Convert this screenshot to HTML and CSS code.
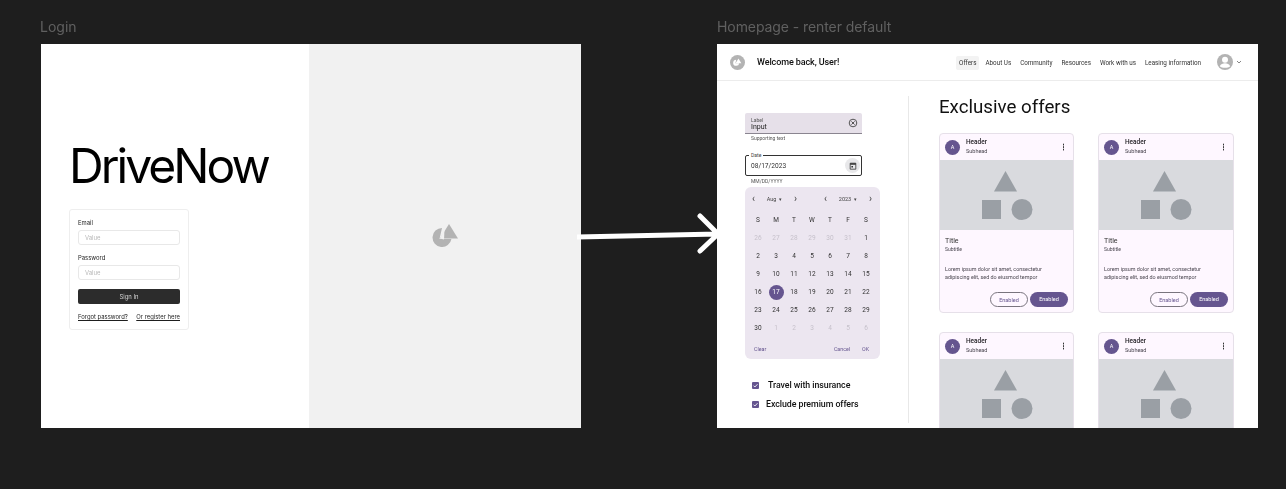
FILE: index.html
```html
<!DOCTYPE html>
<html lang="en">
<head>
<meta charset="utf-8">
<title>DriveNow</title>
<link rel="stylesheet" href="styles.css">
</head>
<body>
<div class="canvas">
  <div class="frame-label login-label">Login</div>
  <section class="frame login-frame">
    <div class="login-left">
      <h1 class="brand">DriveNow</h1>
      <form class="signin">
        <div class="lfield"><span>Email</span><div class="linput">Value</div></div>
        <div class="lfield"><span>Password</span><div class="linput">Value</div></div>
        <div class="lbutton">Sign In</div>
        <div class="llinks"><a>Forgot password?</a><a>Or register here</a></div>
      </form>
    </div>
    <div class="login-right">
      <svg class="logo-big" viewBox="0 0 28 24"><path d="M10 5a9.500 9.500 0 1 0 9.400 11H7.500z" fill="#b3b3b3"/><path d="M17 1l9 14.500H8z" fill="#b3b3b3"/><path d="M12.500 6.500L8 15.500l4 1z" fill="#f1f1f1"/></svg>
    </div>
  </section>

  <svg class="arrow" viewBox="0 0 146 44"><path d="M0 24L141 21M123 3L141 21L123 38" fill="none" stroke="#fff" stroke-width="5" stroke-linecap="round" stroke-linejoin="round"/></svg>

  <div class="frame-label home-label">Homepage - renter default</div>
  <section class="frame home-frame">
    <header class="topbar">
      <div class="avatar-logo"><svg viewBox="0 0 28 24"><path d="M10 5a9.500 9.500 0 1 0 9.400 11H7.500z" fill="#fff"/><path d="M17 1l9 14.500H8z" fill="#fff"/></svg></div>
      <div class="welcome">Welcome back, User!</div>
      <nav class="nav">
        <a class="active">Offers</a><a>About Us</a><a>Community</a><a>Resources</a><a>Work with us</a><a>Leasing information</a>
      </nav>
      <svg class="user" viewBox="0 0 16 16"><circle cx="8" cy="8" r="8" fill="#b3b3b3"/><circle cx="8" cy="5.800" r="3" fill="#fff"/><path d="M2.800 12.200c1-2.200 3-3 5.200-3s4.200.8 5.200 3c-1.200 1-3 1.600-5.200 1.600s-4-.6-5.200-1.600z" fill="#fff"/></svg>
      <svg class="caret" viewBox="0 0 6 4"><path d="M1 1l2 2 2-2" fill="none" stroke="#666" stroke-width=".8"/></svg>
    </header>
    <div class="home-body">
      <aside class="side">
        <div class="filled">
          <div><small>Label</small><span>Input</span></div>
          <svg viewBox="0 0 10 10"><circle cx="5" cy="5" r="3.800" fill="none" stroke="#444" stroke-width=".9"/><path d="M3.400 3.400l3.200 3.200M6.600 3.400l-3.200 3.200" stroke="#444" stroke-width=".9"/></svg>
        </div>
        <div class="support">Supporting text</div>
        <div class="date">
          <small>Date</small><span>08/17/2023</span>
          <i class="date-btn"><svg viewBox="0 0 10 10"><path d="M1.500 1.500h7v7.500h-7z" fill="none" stroke="#333" stroke-width="1"/><path d="M1.500 1.500h7v2h-7zM3 5h2v2H3z" fill="#333"/></svg></i>
        </div>
        <div class="support date-support">MM/DD/YYYY</div>
        <div class="calendar">
          <div class="cal-head">
            <span>‹</span><b class="cal-month">Aug<em>▾</em></b><span>›</span><u></u><span>‹</span><b class="cal-year">2023<em>▾</em></b><span>›</span>
          </div>
          <div class="cal-grid">
            <span class="wd">S</span><span class="wd">M</span><span class="wd">T</span><span class="wd">W</span><span class="wd">T</span><span class="wd">F</span><span class="wd">S</span>
            <span class="off">26</span><span class="off">27</span><span class="off">28</span><span class="off">29</span><span class="off">30</span><span class="off">31</span><span>1</span>
            <span>2</span><span>3</span><span>4</span><span>5</span><span>6</span><span>7</span><span>8</span>
            <span>9</span><span>10</span><span>11</span><span>12</span><span>13</span><span>14</span><span>15</span>
            <span>16</span><span class="sel">17</span><span>18</span><span>19</span><span>20</span><span>21</span><span>22</span>
            <span>23</span><span>24</span><span>25</span><span>26</span><span>27</span><span>28</span><span>29</span>
            <span>30</span><span class="off">1</span><span class="off">2</span><span class="off">3</span><span class="off">4</span><span class="off">5</span><span class="off">6</span>
          </div>
          <div class="cal-actions"><a>Clear</a><u></u><a>Cancel</a><a>OK</a></div>
        </div>
        <label class="check first"><i><svg viewBox="0 0 8 8"><path d="M1.800 4.200l1.500 1.500 3-3.200" fill="none" stroke="#fff" stroke-width="1"/></svg></i><span>Travel with insurance</span></label>
        <label class="check second"><i><svg viewBox="0 0 8 8"><path d="M1.800 4.200l1.500 1.500 3-3.200" fill="none" stroke="#fff" stroke-width="1"/></svg></i><span>Exclude premium offers</span></label>
      </aside>
      <main class="offers">
        <h2>Exclusive offers</h2>
        <div class="cards">
          <article class="card">
            <div class="card-head"><i>A</i><div><b>Header</b><small>Subhead</small></div><em></em></div>
            <div class="media"><svg viewBox="0 0 70 70"><path d="M33.500 11l11.500 20.500H22z" fill="#9a9fa5"/><rect x="10" y="40" width="19" height="19" fill="#9a9fa5"/><circle cx="50" cy="49.500" r="10.500" fill="#9a9fa5"/></svg></div>
            <div class="card-body"><b>Title</b><small>Subtitle</small><p>Lorem ipsum dolor sit amet, consectetur adipiscing elit, sed do eiusmod tempor</p><div class="btns"><a class="ghost">Enabled</a><a class="solid">Enabled</a></div></div>
          </article>
          <article class="card">
            <div class="card-head"><i>A</i><div><b>Header</b><small>Subhead</small></div><em></em></div>
            <div class="media"><svg viewBox="0 0 70 70"><path d="M33.500 11l11.500 20.500H22z" fill="#9a9fa5"/><rect x="10" y="40" width="19" height="19" fill="#9a9fa5"/><circle cx="50" cy="49.500" r="10.500" fill="#9a9fa5"/></svg></div>
            <div class="card-body"><b>Title</b><small>Subtitle</small><p>Lorem ipsum dolor sit amet, consectetur adipiscing elit, sed do eiusmod tempor</p><div class="btns"><a class="ghost">Enabled</a><a class="solid">Enabled</a></div></div>
          </article>
          <article class="card">
            <div class="card-head"><i>A</i><div><b>Header</b><small>Subhead</small></div><em></em></div>
            <div class="media"><svg viewBox="0 0 70 70"><path d="M33.500 11l11.500 20.500H22z" fill="#9a9fa5"/><rect x="10" y="40" width="19" height="19" fill="#9a9fa5"/><circle cx="50" cy="49.500" r="10.500" fill="#9a9fa5"/></svg></div>
          </article>
          <article class="card">
            <div class="card-head"><i>A</i><div><b>Header</b><small>Subhead</small></div><em></em></div>
            <div class="media"><svg viewBox="0 0 70 70"><path d="M33.500 11l11.500 20.500H22z" fill="#9a9fa5"/><rect x="10" y="40" width="19" height="19" fill="#9a9fa5"/><circle cx="50" cy="49.500" r="10.500" fill="#9a9fa5"/></svg></div>
          </article>
        </div>
      </main>
    </div>
  </section>
</div>
</body>
</html>
```
FILE: styles.css
```css
* { box-sizing: border-box; }
html, body { margin: 0; height: 100%; overflow: hidden; background: #1e1e1e; }
.canvas { position: relative; width: 1286px; height: 489px; font-family: Roboto, sans-serif; will-change: opacity; }
.frame-label { position: absolute; top: 19px; font: 14px/16px Inter, sans-serif; color: #606060; }
.login-label { left: 40px; }
.home-label { left: 717px; letter-spacing: -.08px; }
.frame { position: absolute; top: 44px; height: 384px; background: #fff; overflow: hidden; }
.login-frame { left: 41px; width: 540px; display: flex; }
.home-frame { left: 717px; width: 541px; }

.login-left { width: 268px; padding-left: 28px; font-family: Inter, sans-serif; }
.brand { margin: 93px 0 0 0; font: 400 48px/58px Inter, sans-serif; letter-spacing: -2.960px; color: #000; }
.signin { width: 120px; height: 121px; margin-top: 14px; padding: 9px 8px; border: 1px solid #eee; border-radius: 3px; display: flex; flex-direction: column; }
.lfield { height: 35px; flex: none; font-size: 5.900px; line-height: 8px; color: #1e1e1e; }
.linput { height: 15px; margin-top: 3px; padding-left: 6px; border: 1px solid #e8e8e8; border-radius: 3px; font-size: 5.900px; line-height: 13px; color: #b8b8b8; }
.lbutton { height: 15px; flex: none; border-radius: 2px; background: #2c2c2c; color: #d5d5d5; font-size: 5.900px; line-height: 15px; text-align: center; }
.llinks { display: flex; justify-content: space-between; margin-top: 9px; font-size: 5.900px; line-height: 8px; color: #1e1e1e; }
.llinks a { text-decoration: underline; }
.login-right { flex: 1; background: #f1f1f1; display: flex; align-items: center; justify-content: center; }
.logo-big { width: 28px; height: 24px; margin: 0 0 2px 1px; }
.arrow { position: absolute; left: 577px; top: 213px; width: 146px; height: 44px; }

.topbar { height: 37px; border-bottom: 1px solid #ececec; display: flex; align-items: center; padding-left: 13px; }
.avatar-logo { width: 15px; height: 15px; border-radius: 50%; background: #b3b3b3; display: flex; align-items: center; justify-content: center; }
.avatar-logo svg { width: 9px; height: 8px; }
.welcome { margin-left: 12px; font-size: 9px; font-weight: 500; color: #111; letter-spacing: -.1px; }
.nav { margin: 1px 0 0 auto; display: flex; align-items: center; font-size: 6.300px; color: #333; }
.nav a { padding: 3px; margin-right: 3px; line-height: 8px; border-radius: 2px; }
.nav .active { background: #f3f3f3; }
.user { width: 16px; height: 16px; margin-left: 10px; }
.caret { width: 6px; height: 4px; margin: 0 16px 0 3px; }

.home-body { display: flex; height: 347px; }
.side { width: 192px; height: 327px; margin-top: 15px; padding: 17px 0 0 28px; border-right: 1px solid #e8e8e8; position: relative; }
.filled { width: 117px; height: 21px; background: #e6e0e9; border-bottom: 1px solid #8a8590; border-radius: 2px 2px 0 0; padding: 4px 6px 2px; display: flex; justify-content: space-between; align-items: center; }
.filled small { display: block; font-size: 5px; line-height: 6px; color: #555; }
.filled span { display: block; font-size: 7px; line-height: 8px; color: #222; }
.filled svg { width: 10px; height: 10px; margin: -2px -2px 0 0; }
.support { font-size: 5px; line-height: 6px; color: #555; padding: 1px 6px 0; height: 8px; }
.date { position: relative; width: 117px; height: 21px; margin-top: 13px; border: 1.500px solid #333; border-radius: 2px; padding-left: 5px; display: flex; align-items: center; font-size: 6.600px; color: #333; }
.date small { position: absolute; left: 3px; top: -4px; padding: 0 2px; background: #fff; font-size: 5px; line-height: 6px; color: #444; }
.date-btn { margin-left: auto; margin-right: 1px; width: 15px; height: 15px; border-radius: 50%; background: #e8e8ea; display: flex; align-items: center; justify-content: center; }
.date-btn svg { width: 8px; height: 8px; }
.date-support { padding-top: 2px; height: 10px; }
.calendar { width: 135px; height: 172px; margin-top: 1px; border-radius: 6px; background: #ece6f0; padding: 0 5px 0 4px; }
.cal-head { height: 24px; display: flex; align-items: center; font-size: 5.500px; color: #444; }
.cal-head span { width: 9px; text-align: center; font-size: 10px; line-height: 10px; margin-bottom: 1px; }
.cal-head b { text-align: center; font-weight: 400; }
.cal-month { width: 33px; }
.cal-year { width: 36px; }
.cal-head em { font-style: normal; font-size: 5px; margin-left: 3px; }
.cal-head u { flex: 1; }
.cal-grid { display: grid; grid-template-columns: repeat(7, 18px); grid-auto-rows: 18px; font-size: 6.500px; color: #333; text-align: center; }
.cal-grid span { line-height: 18px; }
.cal-grid .wd { color: #333; }
.cal-grid .off { color: #c6c1cb; }
.cal-grid .sel { width: 15px; height: 15px; margin: 1.500px 0 0 1.500px; border-radius: 50%; background: #65558f; color: #fff; line-height: 15px; }
.cal-actions { display: flex; margin-top: 9px; padding: 0 6px 0 5px; font-size: 5.300px; color: #65558f; gap: 12px; }
.cal-actions u { flex: 1; }
.check { display: flex; align-items: center; font-size: 8.800px; font-weight: 500; color: #111; letter-spacing: -.05px; }
.check i { width: 7px; height: 7px; background: #65558f; border-radius: 1px; display: flex; }
.check span { line-height: 12px; }
.first { margin: 20px 0 0 7px; }
.first span { margin-left: 9px; }
.second { margin: 7px 0 0 7px; }
.second span { margin-left: 7px; }

.offers { padding: 0 0 0 30px; flex: 1; }
.offers h2 { margin: 14px 0 0; font: 400 18.700px/24px Roboto, sans-serif; color: #111; }
.cards { display: grid; grid-template-columns: 135px 136px; column-gap: 24px; row-gap: 19px; margin-top: 14px; }
.card { height: 180px; border: 1px solid #e6e0e9; border-radius: 4px; background: #fef7ff; overflow: hidden; }
.card-head { height: 26px; display: flex; align-items: center; padding: 0 9px 0 5px; }
.card-head i { width: 15px; height: 15px; border-radius: 50%; background: #65558f; color: #fff; font: 400 5.500px/15px Roboto, sans-serif; text-align: center; }
.card-head div { margin-left: 6px; flex: 1; }
.card-head b { display: block; font-size: 6.500px; font-weight: 500; line-height: 9px; color: #1d1b20; }
.card-head small { display: block; font-size: 5.500px; line-height: 9px; color: #49454f; }
.card-head em { width: 1.500px; height: 1.500px; background: #333; border-radius: 50%; box-shadow: 0 -2.500px #333, 0 2.500px #333; }
.media { height: 70px; background: #d9dade; display: flex; justify-content: center; }
.media svg { width: 70px; height: 70px; }
.card-body { padding: 7px 5px 0; position: relative; }
.card-body b { display: block; font-size: 7px; font-weight: 400; line-height: 9px; color: #333; }
.card-body small { display: block; font-size: 5px; line-height: 7px; color: #49454f; }
.card-body p { margin: 13px 0 0; max-width: 104px; font-size: 5.400px; line-height: 7.500px; color: #49454f; }
.btns { display: flex; justify-content: flex-end; gap: 2px; margin-top: 11px; }
.btns a { width: 38px; height: 15px; border-radius: 8px; font-size: 5.500px; font-weight: 400; line-height: 15px; text-align: center; }
.ghost { border: .6px solid #79747e; color: #65558f; line-height: 14px !important; }
.solid { background: #65558f; color: #fff; }
```
